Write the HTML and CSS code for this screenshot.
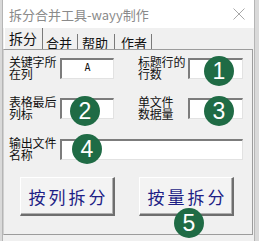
FILE: index.html
```html
<!DOCTYPE html>
<html lang="zh">
<head>
<meta charset="utf-8">
<link rel="stylesheet" href="styles.css">
</head>
<body>
<div class="window">
  <div class="titlebar">
    <span class="title">拆分合并工具-wayy制作</span>
    <svg class="close" width="12" height="12" viewBox="0 0 12 12"><path d="M0.5 0.5 L11.5 11.5 M11.5 0.5 L0.5 11.5" stroke="#a8a8a8" stroke-width="1" fill="none"/></svg>
  </div>
  <div class="tabs">
    <div class="tab active">拆分</div>
    <div class="tab t2">合并</div>
    <div class="tab t3">帮助</div>
    <div class="tab t4">作者</div>
  </div>
  <div class="panel">
    <div class="row">
      <div class="label">关键字所<br>在列</div>
      <div class="box">A</div>
      <div class="label">标题行的<br>行数</div>
      <div class="box"></div>
    </div>
    <div class="row">
      <div class="label">表格最后<br>列标</div>
      <div class="box"></div>
      <div class="label">单文件<br>数据量</div>
      <div class="box"></div>
    </div>
    <div class="row wide">
      <div class="label">输出文件<br>名称</div>
      <div class="box"></div>
    </div>
    <div class="buttons">
      <div class="btn">按列拆分</div>
      <div class="btn">按量拆分</div>
    </div>
    <div class="badge b1">1</div>
    <div class="badge b2">2</div>
    <div class="badge b3">3</div>
    <div class="badge b4">4</div>
    <div class="badge b5">5</div>
  </div>
</div>
</body>
</html>
```

FILE: styles.css
```css
html, body {
  margin: 0;
  padding: 0;
  background: #d9d9d9;
  width: 259px;
  height: 241px;
  overflow: hidden;
  font-family: "Noto Sans CJK SC", "Noto Sans", sans-serif;
}
.window {
  margin-left: 2px;
  width: 253px;
  height: 241px;
  background: #f0f0f0;
  border-left: 1px solid #b5b5b5;
  border-right: 1px solid #b5b5b5;
  box-sizing: border-box;
}
.titlebar {
  height: 28px;
  background: #ffffff;
  display: flex;
  align-items: center;
  justify-content: space-between;
  padding: 0 9px 0 6px;
}
.title {
  font-size: 13px;
  color: #8a8a8a;
}
.close {
  display: block;
}
.tabs {
  height: 21px;
  display: flex;
  padding-left: 1px;
}
.tab {
  font-size: 13px;
  color: #111;
  border-right: 1px solid #7a7a7a;
  height: 15px;
  margin-top: 6px;
  line-height: 15px;
  box-sizing: content-box;
}
.tab.active {
  width: 33px;
  padding-left: 4px;
  height: 21px;
  margin-top: 0;
  line-height: 20px;
  font-size: 14px;
  border-left: 1px solid #ffffff;
}
.tab.t2 { width: 31px; padding-left: 3px; line-height: 17px; }
.tab.t3 { width: 32px; padding-left: 4px; line-height: 17px; }
.tab.t4 { width: 30px; padding-left: 6px; line-height: 17px; }
.panel {
  position: relative;
  height: 186px;
  box-sizing: border-box;
  border: 1px solid #9c9c9c;
  border-left-color: #d0d0d0;
  margin-right: 1px;
  padding: 6px 0 0 5px;
  display: flex;
  flex-direction: column;
  gap: 16px;
  background: #f0f0f0;
}
.row {
  display: grid;
  grid-template-columns: 51px 54px 24px 50px 55px;
  height: 24px;
  align-items: start;
}
.row .label:nth-child(3) { grid-column: 4; }
.row .box:nth-child(4) { grid-column: 5; }
.row.wide {
  grid-template-columns: 51px 183px;
  margin-top: 1px;
}
.label {
  font-size: 12px;
  line-height: 12px;
  color: #111;
  letter-spacing: -0.2px;
  white-space: nowrap;
}
.box {
  margin-top: 2px;
  height: 21px;
  box-sizing: border-box;
  background: #ffffff;
  border-top: 2px solid #7c7c7c;
  border-left: 2px solid #7c7c7c;
  border-bottom: 1px solid #e2e2e2;
  border-right: 1px solid #e2e2e2;
  font-family: "DejaVu Sans Mono", monospace;
  font-size: 10px;
  color: #111;
  text-align: center;
  line-height: 16px;
}
.buttons {
  display: flex;
  gap: 24px;
  padding-left: 11px;
}
.btn {
  width: 95px;
  height: 39px;
  box-sizing: border-box;
  background: #f3f3f3;
  border-top: 1px solid #ffffff;
  border-left: 1px solid #ffffff;
  border-right: 2px solid #6e6e6e;
  border-bottom: 2px solid #6e6e6e;
  box-shadow: inset -1px -1px 0 #b0b0b0;
  display: flex;
  align-items: center;
  justify-content: center;
  font-size: 17px;
  letter-spacing: 3px;
  color: #1e1e86;
  padding-left: 3px;
}
.badge {
  position: absolute;
  width: 30px;
  height: 30px;
  border-radius: 50%;
  background: #1f6b45;
  color: #ffffff;
  font-family: "Liberation Sans", Arial, sans-serif;
  font-size: 23px;
  line-height: 30px;
  text-align: center;
}
.b1 { left: 200px; top: 6px; }
.b2 { left: 66px; top: 46px; }
.b3 { left: 200px; top: 46px; }
.b4 { left: 68px; top: 84px; }
.b5 { left: 170px; top: 158px; }
```
